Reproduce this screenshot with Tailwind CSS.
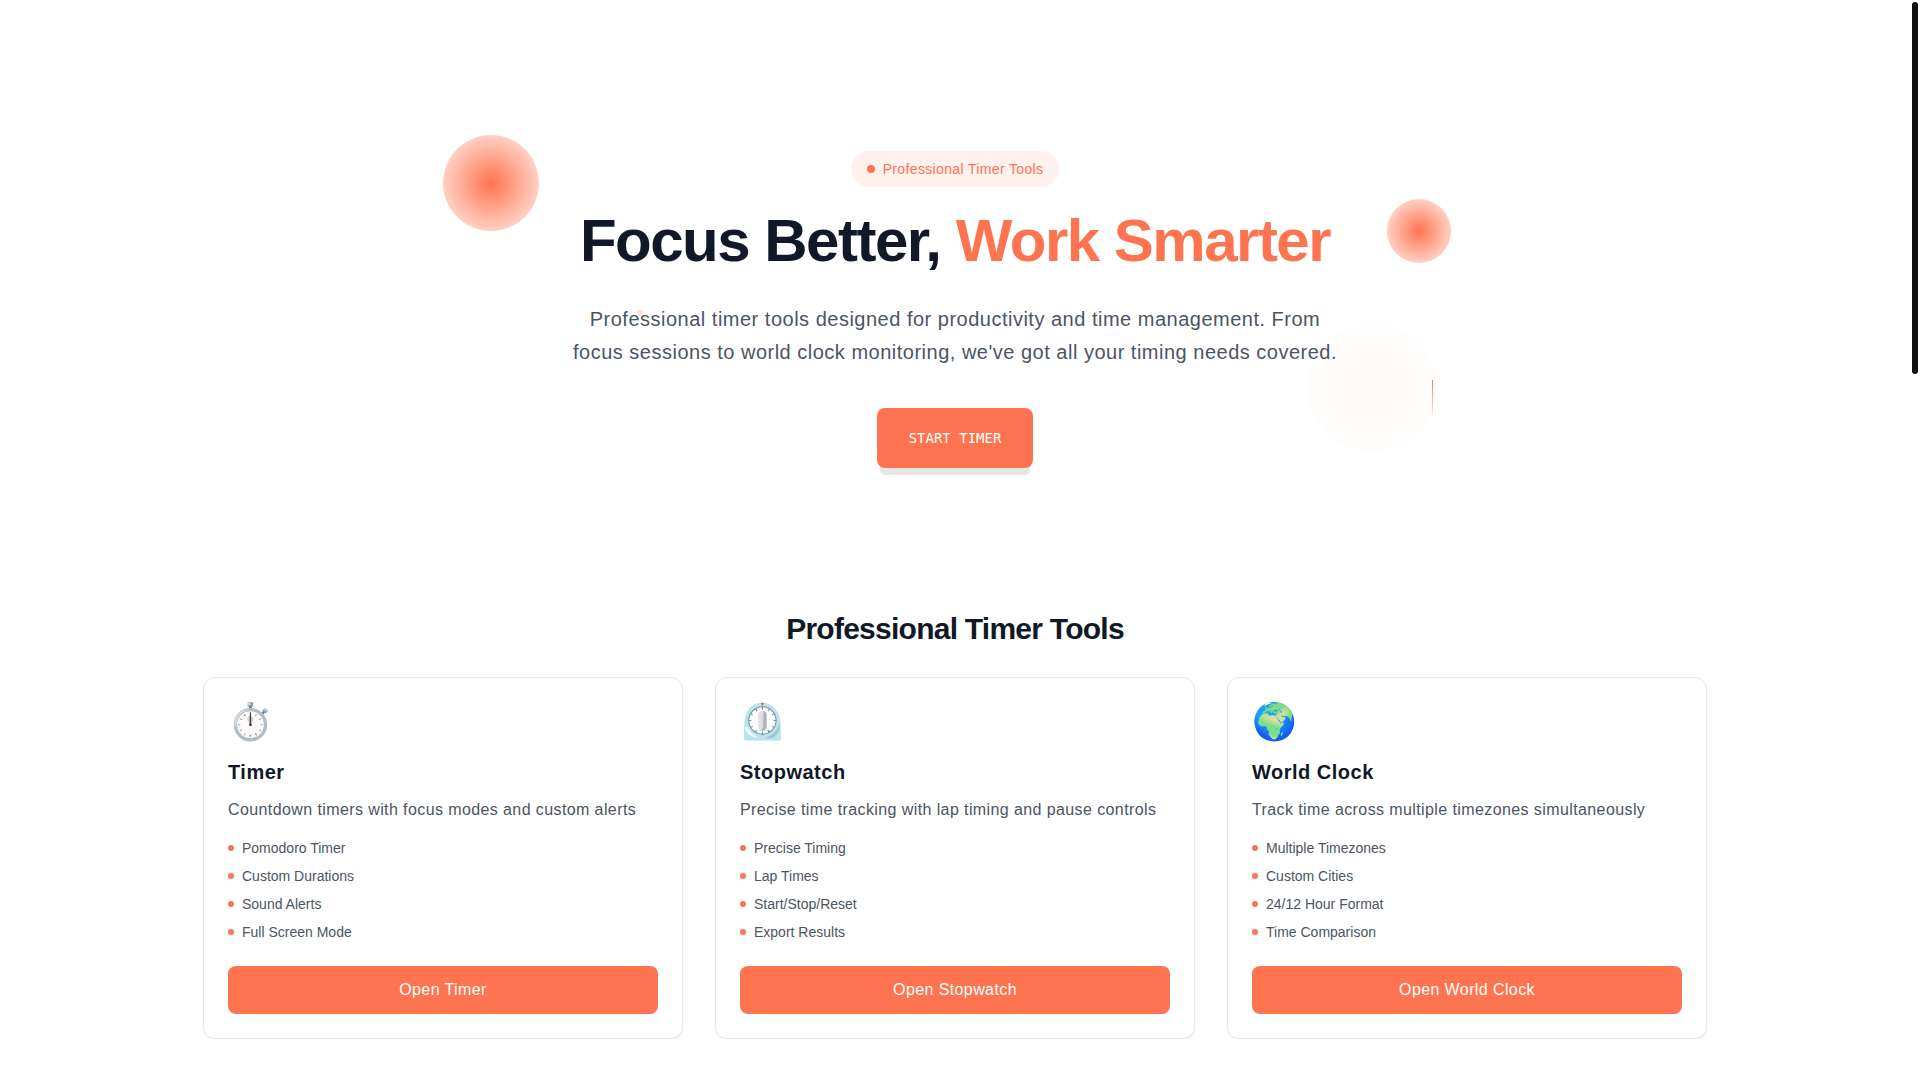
<!DOCTYPE html>
<html lang="en">
<head>
  <meta charset="UTF-8" />
  <meta name="viewport" content="width=device-width, initial-scale=1.0"/>
  <title>Professional Timer Tools</title>
  <script src="https://cdn.jsdelivr.net/npm/@tailwindcss/browser@4"></script>
</head>
<body class="bg-white text-[#111827] font-[Arial,'Liberation_Sans',sans-serif] [text-rendering:optimizeSpeed] pr-[10px]">

  <!-- Scroll thumb -->
  <div class="fixed top-[2px] right-[2px] w-[6px] h-[372px] rounded-full bg-[#111]" aria-hidden="true"></div>

  <!-- Hero -->
  <header class="relative max-w-5xl mx-auto pt-[151px] pb-[143px] text-center">
    <!-- Floating decorations -->
    <div class="absolute left-0 top-[135px] size-24 rounded-full bg-[radial-gradient(circle,#ff7450,#ff745010)]"></div>
    <div class="absolute right-4 top-[199px] size-16 rounded-full bg-[radial-gradient(circle,#ff7450,#ff745010)]"></div>
    <div class="absolute right-[31px] top-[324px] size-32 rounded-full opacity-5 bg-[radial-gradient(circle,#ff7450,#ff745010)]"></div>
    <div class="absolute right-[34px] top-[380px] w-px h-10 bg-linear-to-b from-[#ff7450] to-transparent"></div>
    <div class="absolute left-[194px] top-[310px] size-[6px] rounded-full bg-[#ffe1db]"></div>

    <div class="relative flex flex-col items-center">
      <div class="flex items-center gap-2 px-4 py-2 mb-4 rounded-full bg-[#fff1ee] text-sm tracking-wide text-[#ff7450]">
        <span class="size-2 rounded-full bg-[#ff7450]"></span>
        Professional Timer Tools
      </div>
      <h1 class="text-6xl leading-tight font-bold tracking-tight mb-[25px]">
        Focus Better, <span class="text-[#ff7450]">Work Smarter</span>
      </h1>
      <p class="max-w-3xl text-xl leading-relaxed tracking-wide text-[#4b5563] mb-10">
        Professional timer tools designed for productivity and time management. From focus sessions to world clock monitoring, we've got all your timing needs covered.
      </p>
      <button type="button" class="px-8 py-5 rounded-lg bg-[#ff7450] text-white text-sm font-['DejaVu_Sans_Mono',monospace] shadow-[0_10px_0_-3px_rgba(0,0,0,0.1)]">START TIMER</button>
    </div>
  </header>

  <!-- Tools -->
  <main class="max-w-[1536px] mx-auto px-4">
    <h2 class="text-3xl font-bold tracking-tight text-center mb-[30px]">Professional Timer Tools</h2>

    <div class="grid grid-cols-3 gap-8">
      <section class="p-6 bg-white border border-gray-200 rounded-xl shadow-xs">
        <div class="text-4xl mb-4">⏱️</div>
        <h3 class="text-xl font-bold tracking-wide mb-3">Timer</h3>
        <p class="tracking-wide text-[#4b5563] mb-4">Countdown timers with focus modes and custom alerts</p>
        <ul class="space-y-2 mb-6 text-sm text-[#4b5563]">
          <li class="flex items-center gap-2"><span class="size-[6px] rounded-full bg-[#ff7450]"></span>Pomodoro Timer</li>
          <li class="flex items-center gap-2"><span class="size-[6px] rounded-full bg-[#ff7450]"></span>Custom Durations</li>
          <li class="flex items-center gap-2"><span class="size-[6px] rounded-full bg-[#ff7450]"></span>Sound Alerts</li>
          <li class="flex items-center gap-2"><span class="size-[6px] rounded-full bg-[#ff7450]"></span>Full Screen Mode</li>
        </ul>
        <a href="#timer" class="block py-3 rounded-lg bg-[#ff7450] text-white text-center tracking-wide">Open Timer</a>
      </section>

      <section class="p-6 bg-white border border-gray-200 rounded-xl shadow-xs">
        <div class="text-4xl mb-4">⏲️</div>
        <h3 class="text-xl font-bold tracking-wide mb-3">Stopwatch</h3>
        <p class="tracking-wide text-[#4b5563] mb-4">Precise time tracking with lap timing and pause controls</p>
        <ul class="space-y-2 mb-6 text-sm text-[#4b5563]">
          <li class="flex items-center gap-2"><span class="size-[6px] rounded-full bg-[#ff7450]"></span>Precise Timing</li>
          <li class="flex items-center gap-2"><span class="size-[6px] rounded-full bg-[#ff7450]"></span>Lap Times</li>
          <li class="flex items-center gap-2"><span class="size-[6px] rounded-full bg-[#ff7450]"></span>Start/Stop/Reset</li>
          <li class="flex items-center gap-2"><span class="size-[6px] rounded-full bg-[#ff7450]"></span>Export Results</li>
        </ul>
        <a href="#stopwatch" class="block py-3 rounded-lg bg-[#ff7450] text-white text-center tracking-wide">Open Stopwatch</a>
      </section>

      <section class="p-6 bg-white border border-gray-200 rounded-xl shadow-xs">
        <div class="text-4xl mb-4">🌍</div>
        <h3 class="text-xl font-bold tracking-wide mb-3">World Clock</h3>
        <p class="tracking-wide text-[#4b5563] mb-4">Track time across multiple timezones simultaneously</p>
        <ul class="space-y-2 mb-6 text-sm text-[#4b5563]">
          <li class="flex items-center gap-2"><span class="size-[6px] rounded-full bg-[#ff7450]"></span>Multiple Timezones</li>
          <li class="flex items-center gap-2"><span class="size-[6px] rounded-full bg-[#ff7450]"></span>Custom Cities</li>
          <li class="flex items-center gap-2"><span class="size-[6px] rounded-full bg-[#ff7450]"></span>24/12 Hour Format</li>
          <li class="flex items-center gap-2"><span class="size-[6px] rounded-full bg-[#ff7450]"></span>Time Comparison</li>
        </ul>
        <a href="#world-clock" class="block py-3 rounded-lg bg-[#ff7450] text-white text-center tracking-wide">Open World Clock</a>
      </section>
    </div>
  </main>

</body>
</html>
